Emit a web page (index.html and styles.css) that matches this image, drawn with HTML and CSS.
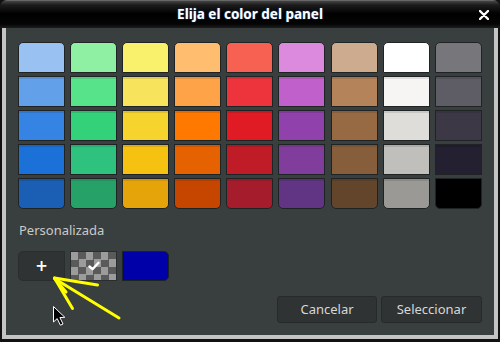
FILE: index.html
```html
<!DOCTYPE html>
<html lang="es">
<head>
<meta charset="utf-8">
<title>Elija el color del panel</title>
<link rel="stylesheet" href="styles.css">
</head>
<body>
<div class="window">
  <div class="titlebar">
    <span class="title">Elija el color del panel</span>
    <svg class="close" width="10" height="10" viewBox="0 0 10 10"><path d="M1 1 L9 9 M9 1 L1 9" stroke="#fff" stroke-width="2.4" stroke-linecap="round"/></svg>
  </div>
  <div class="frame">
    <div class="content">
      <div class="palette">
        <div class="sw" style="background:#99c1f1"></div>
        <div class="sw" style="background:#8ff0a4"></div>
        <div class="sw" style="background:#f9f06b"></div>
        <div class="sw" style="background:#ffbe6f"></div>
        <div class="sw" style="background:#f66151"></div>
        <div class="sw" style="background:#dc8add"></div>
        <div class="sw" style="background:#cdab8f"></div>
        <div class="sw" style="background:#ffffff"></div>
        <div class="sw" style="background:#77767b"></div>

        <div class="sw" style="background:#62a0ea"></div>
        <div class="sw" style="background:#57e389"></div>
        <div class="sw" style="background:#f8e45c"></div>
        <div class="sw" style="background:#ffa348"></div>
        <div class="sw" style="background:#ed333b"></div>
        <div class="sw" style="background:#c061cb"></div>
        <div class="sw" style="background:#b5835a"></div>
        <div class="sw" style="background:#f6f5f4"></div>
        <div class="sw" style="background:#5e5c64"></div>

        <div class="sw" style="background:#3584e4"></div>
        <div class="sw" style="background:#33d17a"></div>
        <div class="sw" style="background:#f6d32d"></div>
        <div class="sw" style="background:#ff7800"></div>
        <div class="sw" style="background:#e01b24"></div>
        <div class="sw" style="background:#9141ac"></div>
        <div class="sw" style="background:#986a44"></div>
        <div class="sw" style="background:#deddda"></div>
        <div class="sw" style="background:#3d3846"></div>

        <div class="sw" style="background:#1c71d8"></div>
        <div class="sw" style="background:#2ec27e"></div>
        <div class="sw" style="background:#f5c211"></div>
        <div class="sw" style="background:#e66100"></div>
        <div class="sw" style="background:#c01c28"></div>
        <div class="sw" style="background:#813d9c"></div>
        <div class="sw" style="background:#865e3c"></div>
        <div class="sw" style="background:#c0bfbc"></div>
        <div class="sw" style="background:#241f31"></div>

        <div class="sw" style="background:#1a5fb4"></div>
        <div class="sw" style="background:#26a269"></div>
        <div class="sw" style="background:#e5a50a"></div>
        <div class="sw" style="background:#c64600"></div>
        <div class="sw" style="background:#a51d2d"></div>
        <div class="sw" style="background:#613583"></div>
        <div class="sw" style="background:#63452c"></div>
        <div class="sw" style="background:#9a9996"></div>
        <div class="sw" style="background:#000000"></div>
      </div>

      <div class="label">Personalizada</div>

      <div class="custom">
        <button class="add">+</button>
        <div class="checker">
          <svg width="12" height="10" viewBox="0 0 12 10"><path d="M1.5 5.5 L4.5 8.2 L10.5 1.8" fill="none" stroke="#fff" stroke-width="2.4" stroke-linecap="round" stroke-linejoin="round"/></svg>
        </div>
        <div class="blue"></div>
      </div>

      <div class="actions">
        <button class="btn">Cancelar</button>
        <button class="btn">Seleccionar</button>
      </div>
    </div>
  </div>

  <svg class="overlay" width="500" height="342" viewBox="0 0 500 342">
    <g stroke="#ffff00" stroke-width="3" stroke-linecap="round" fill="none">
      <path d="M54.5 278 L97.5 285"/>
      <path d="M54.5 278 L72.5 308.5"/>
      <path d="M56 279.5 L119 318"/>
      <path d="M54.5 278.5 L66 292"/>
    </g>
    <path d="M53.5 306.5 L53.5 322 L57.2 318.6 L60.4 325.2 L63 324 L59.9 317.6 L64.8 317.3 Z" fill="#000" stroke="#fff" stroke-width="1" stroke-linejoin="miter"/>
  </svg>
</div>
</body>
</html>
```

FILE: styles.css
```css
* { box-sizing: border-box; }

html, body {
  margin: 0;
  padding: 0;
}

body {
  width: 500px;
  height: 342px;
  background: #111;
  font-family: "Noto Sans", "DejaVu Sans", sans-serif;
  overflow: hidden;
}

.window {
  position: relative;
  width: 500px;
  height: 342px;
}

.titlebar {
  height: 28px;
  border-radius: 7px 7px 0 0;
  background: linear-gradient(to bottom, #8a8a8a 0px, #444 1px, #1c1c1c 5px, #000 14px, #050505 24px, #1c1c1c 28px);
  display: flex;
  align-items: center;
  justify-content: center;
  position: relative;
}

.title {
  color: #fff;
  font-weight: bold;
  font-size: 13.5px;
  text-shadow: 0 0 2px #1f3f70, 0 0 1px #1f3f70;
  margin-top: 0;
}

.close {
  position: absolute;
  right: 11px;
  top: 10px;
}

.frame {
  margin-left: 2px;
  width: 496px;
  height: 311px;
  border: 4px solid #c4c4c4;
  border-top: none;
  background: #393e3e;
}

.content {
  padding: 14px 8px 0 8px;
}

.palette {
  display: grid;
  grid-template-columns: repeat(9, 47px);
  grid-auto-rows: 31px;
  column-gap: 5.1px;
  row-gap: 2.9px;
  width: 464px;
  margin-left: 4px;
}

.sw {
  border: 1px solid #202323;
  box-shadow: inset 0 2px 0 rgba(0,0,0,0.10);
}

.sw:nth-child(-n+9) {
  border-radius: 5px 5px 0 0;
  box-shadow: none;
}

.sw:nth-child(n+37) {
  border-radius: 0 0 5px 5px;
}

.label {
  margin-top: 13px;
  margin-left: 5px;
  height: 16px;
  line-height: 16px;
  font-size: 13px;
  color: #c9cbcb;
}

.custom {
  display: flex;
  gap: 5px;
  margin-top: 13px;
  margin-left: 4px;
  height: 30px;
}

.add {
  width: 47px;
  height: 30px;
  border: 1px solid #2a2d2d;
  border-radius: 5px 0 0 5px;
  background: #2f3333;
  color: #fff;
  font-family: "DejaVu Sans", sans-serif;
  font-weight: bold;
  font-size: 15px;
  padding: 0;
  line-height: 26px;
}

.checker {
  width: 47px;
  height: 30px;
  border: 1px solid #2a2d2d;
  background: repeating-conic-gradient(#5a5a5a 0 25%, #9c9c9c 0 50%) 0 0 / 15px 15px;
  display: flex;
  align-items: center;
  justify-content: center;
}

.blue {
  width: 47px;
  height: 30px;
  border: 1px solid #1e2121;
  border-radius: 0 5px 5px 0;
  background: #0000a8;
}

.actions {
  display: flex;
  justify-content: flex-end;
  gap: 4px;
  margin-top: 15px;
  margin-right: 4px;
}

.btn {
  height: 27px;
  border: 1px solid #272a2a;
  border-radius: 3px;
  background: #2f3333;
  color: #d6d8d8;
  font-family: "Noto Sans", "DejaVu Sans", sans-serif;
  font-size: 13px;
  padding: 0;
}

.btn:first-child { width: 100px; }
.btn:last-child { width: 101px; }

.overlay {
  position: absolute;
  left: 0;
  top: 0;
  pointer-events: none;
}
```
